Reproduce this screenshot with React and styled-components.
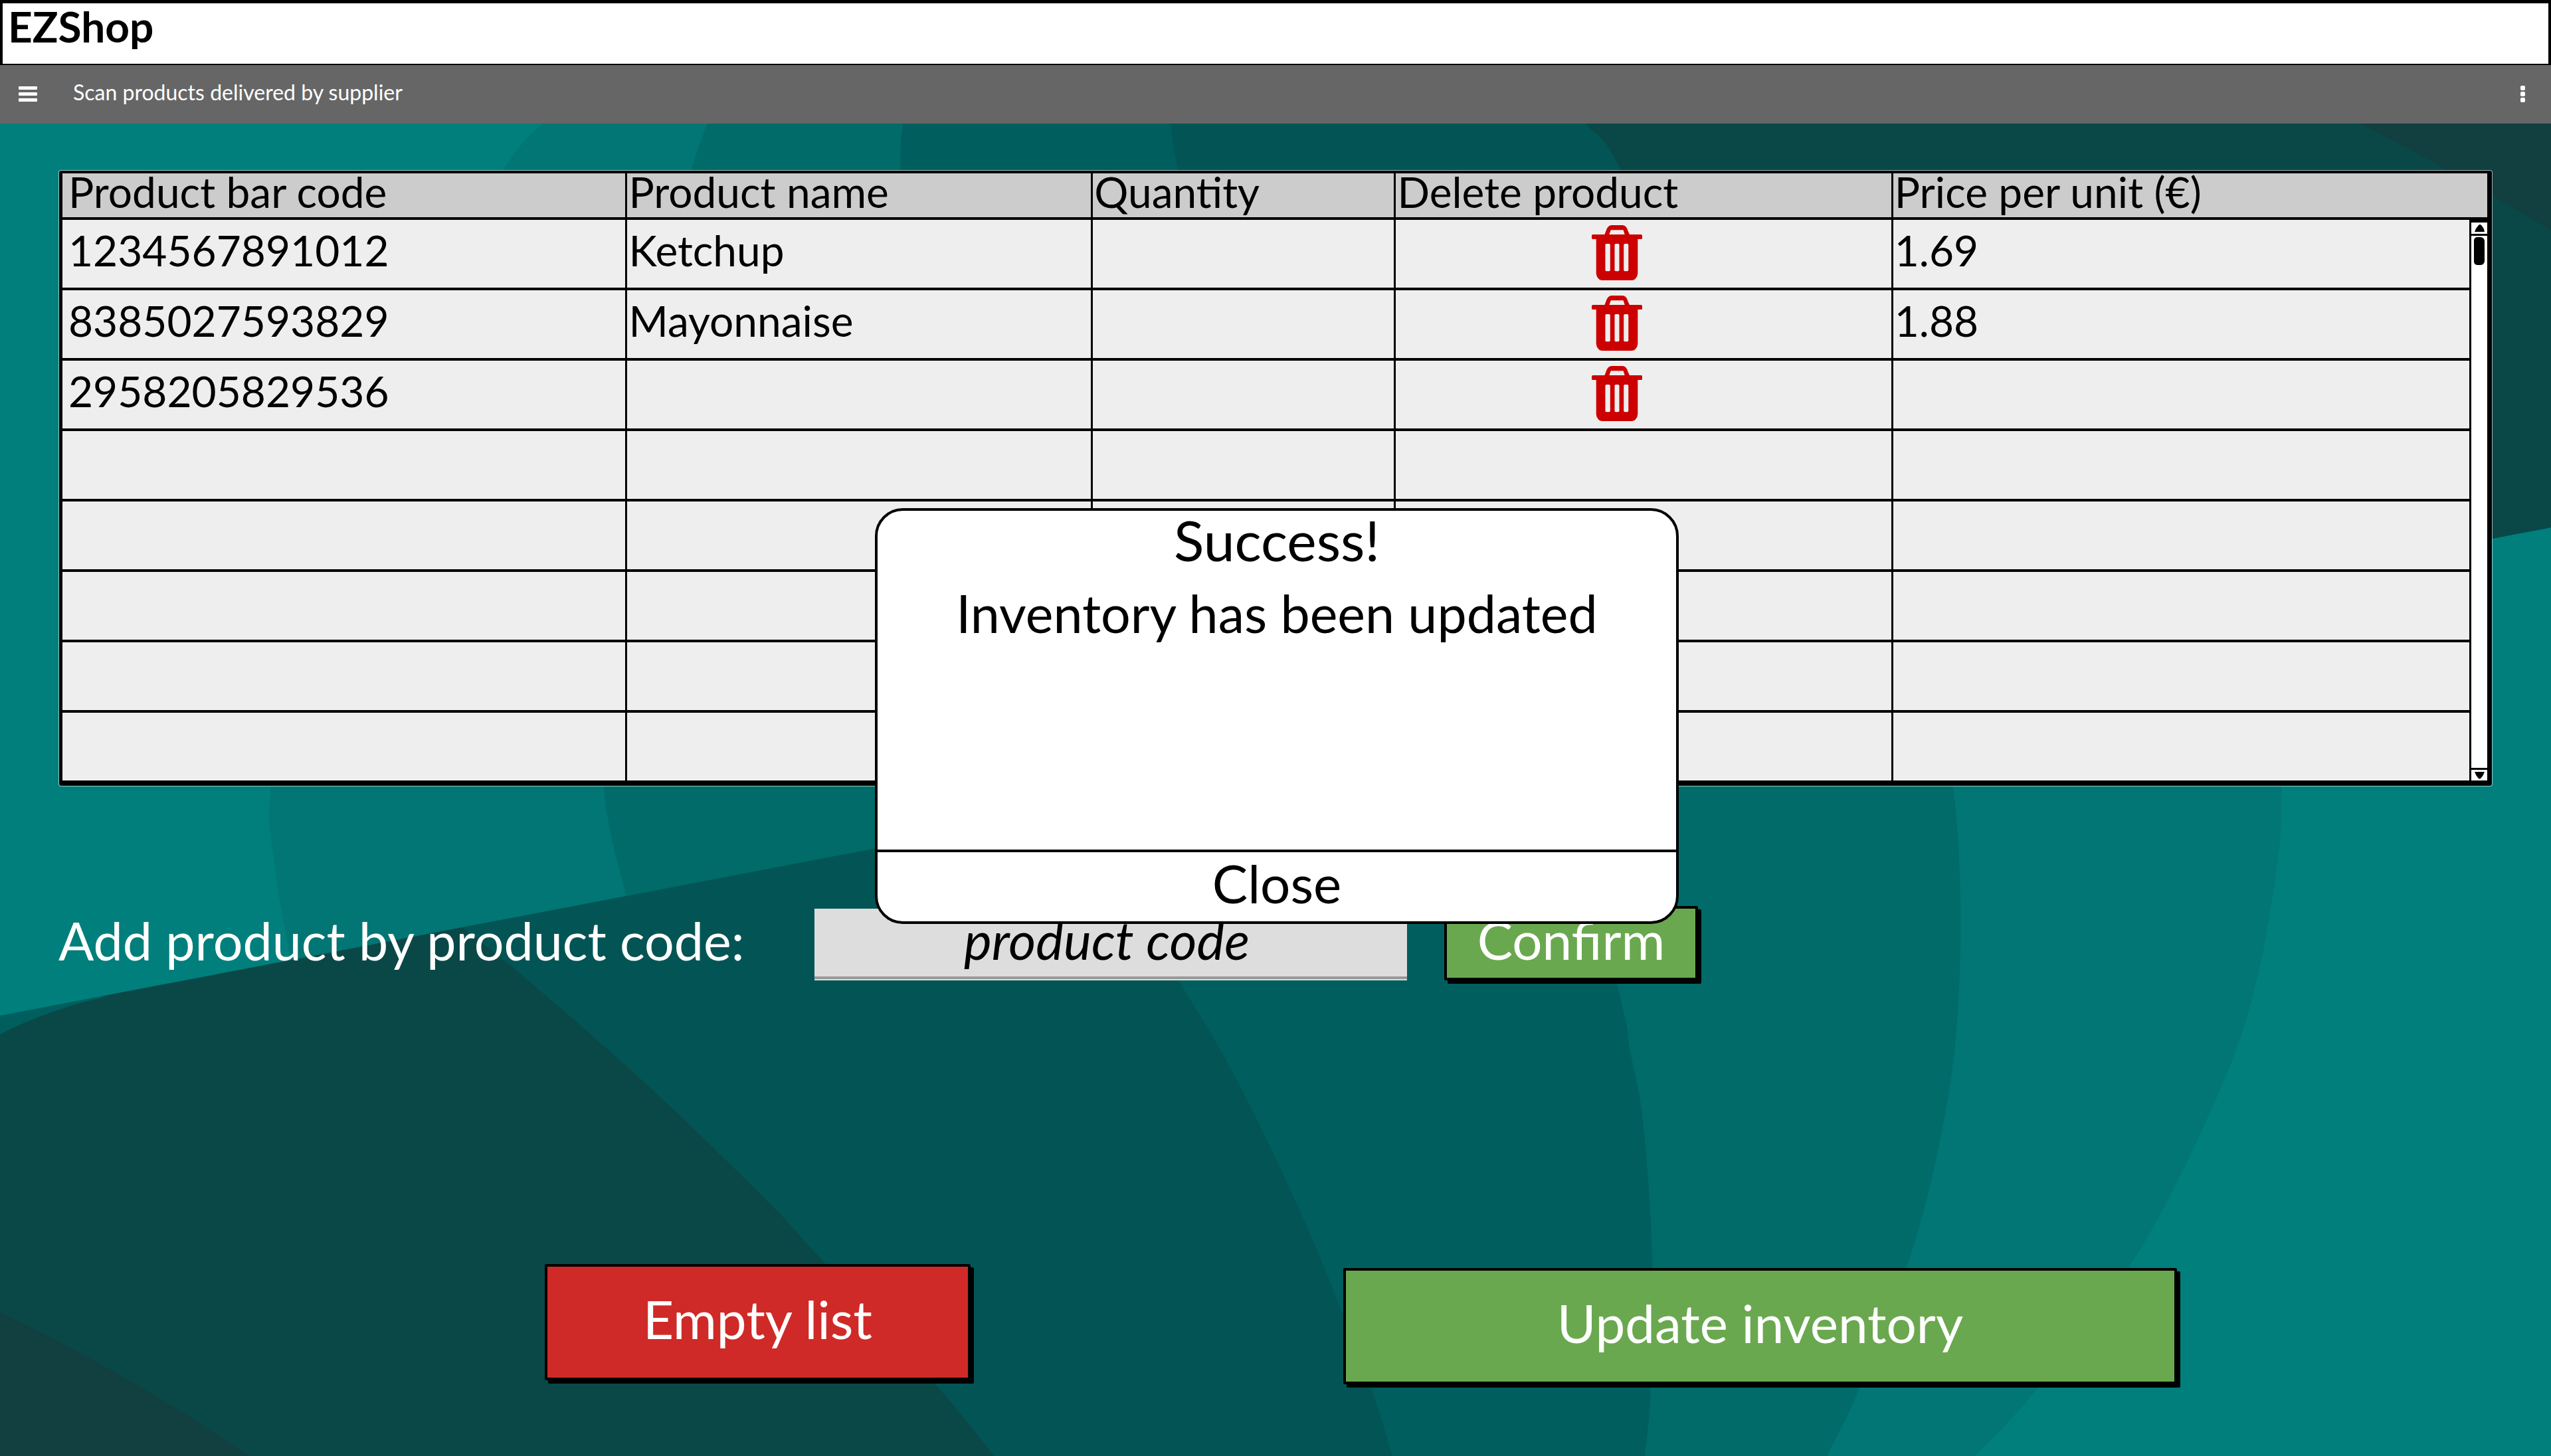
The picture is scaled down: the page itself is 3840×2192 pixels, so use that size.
import React from "react";
import styled, { createGlobalStyle } from "styled-components";

const GlobalStyle = createGlobalStyle`
  *, *::before, *::after { box-sizing: border-box; }
  body {
    margin: 0;
    background: #007f7c;
    font-family: Lato, "Open Sans", sans-serif;
    color: #000;
  }
  button, input { font: inherit; color: inherit; margin: 0; }
  button { cursor: pointer; }
`;

/* ---------- backdrop ---------- */

const Backdrop = styled.svg`
  position: fixed;
  inset: 0;
  width: 100%;
  height: 100%;
  z-index: -1;
`;

// Smooth curve through a list of points (Catmull-Rom converted to Béziers).
function curve(points) {
  const at = (i) => points[Math.max(0, Math.min(points.length - 1, i))];
  let d = `${points[0][0]} ${points[0][1]}`;
  for (let i = 0; i < points.length - 1; i++) {
    const [a, b, c, e] = [at(i - 1), at(i), at(i + 1), at(i + 2)];
    d += ` C${b[0] + (c[0] - a[0]) / 6} ${b[1] + (c[1] - a[1]) / 6}`;
    d += ` ${c[0] - (e[0] - b[0]) / 6} ${c[1] - (e[1] - b[1]) / 6} ${c[0]} ${c[1]}`;
  }
  return d;
}

const lowerBands = [
  ["#017674", [[3420, 900], [3434, 1184], [3426, 1314], [3393, 1492], [3338, 1649], [3222, 1880], [3067, 2090], [2973, 2192]]],
  ["#006b69", [[2900, 900], [2940, 1184], [2951, 1358], [2946, 1537], [2925, 1693], [2879, 1880], [2799, 2090], [2750, 2192]]],
  ["#005f5e", [[2320, 1060], [2434, 1482], [2454, 1583], [2473, 1687], [2487, 1890], [2485, 2090], [2476, 2192]]],
  ["#035555", [[1600, 1200], [1774, 1476], [1844, 1593], [1909, 1720], [1986, 1890], [2064, 2090], [2096, 2192]]],
  ["#0a4848", [[697, 1397], [788, 1470], [974, 1633], [1154, 1807], [1231, 1890], [1408, 2084], [1497, 2192]]],
];

const upperBands = [
  ["#017674", [[885, 110], [816, 186], [757, 256], [570, 540], [445, 880], [408, 1184], [413, 1300], [437, 1440], [460, 1540]]],
  ["#006b69", [[1095, 110], [1065, 186], [1041, 256], [950, 560], [905, 900], [909, 1184], [942, 1347], [965, 1440]]],
  ["#005f5e", [[1364, 110], [1359, 186], [1355, 256], [1350, 640], [1400, 1184], [1440, 1340]]],
  ["#035555", [[1754, 110], [1763, 186], [1773, 256], [1850, 640], [2000, 1260]]],
  ["#0a4848", [[2345, 110], [2388, 186], [2440, 256], [2600, 600], [2900, 1100]]],
];

function BackdropArt() {
  return (
    <Backdrop viewBox="0 0 3840 2192" preserveAspectRatio="none" aria-hidden="true">
      <defs>
        <clipPath id="upper">
          <path d="M0 0H3840V794L0 1529Z" />
        </clipPath>
      </defs>
      <rect width="3840" height="2192" fill="#007f7c" />
      {lowerBands.map(([fill, pts]) => (
        <path key={fill} fill={fill} d={`M0 900 L${curve(pts)} L0 2192Z`} />
      ))}
      <path d="M0 1500H160L124 1509Q52 1530 0 1557Z" fill="#005f5e" />
      <path d="M0 1975Q200 2072 375 2192H0Z" fill="#123f3f" />
      <g clipPath="url(#upper)">
        <rect width="3840" height="2192" fill="#007f7c" />
        {upperBands.map(([fill, pts]) => (
          <path key={fill} fill={fill} d={`M3840 110 L${curve(pts)} L3840 1600Z`} />
        ))}
        <path d="M3553 186Q3690 256 3840 347V186Z" fill="#123f3f" />
      </g>
    </Backdrop>
  );
}

/* ---------- header ---------- */

const Page = styled.div`
  display: flex;
  flex-direction: column;
  min-height: 100vh;
`;

const TitleBar = styled.header`
  height: 98px;
  padding: 0 8px;
  background: #fff;
  border: 4px solid #000;
  border-top-width: 5px;
  border-bottom-width: 2px;
`;

const Brand = styled.h1`
  margin: 0;
  font-size: 64px;
  line-height: 70px;
  font-weight: 700;
`;

const Toolbar = styled.nav`
  display: flex;
  align-items: center;
  height: 88px;
  padding: 0 38px 0 28px;
  background: #666;
  color: #fff;
`;

const ToolbarTitle = styled.h2`
  flex: 1;
  margin: 0;
  padding: 0 0 6px 54px;
  font-size: 32px;
  line-height: 40px;
  font-weight: 400;
`;

const IconButton = styled.button`
  display: inline-flex;
  padding: 0;
  border: 0;
  background: none;
  color: ${(p) => p.$color || "inherit"};
  svg { display: block; fill: currentColor; }
`;

/* ---------- table ---------- */

const Main = styled.main`
  padding: 71px 88px 0;
`;

const TablePanel = styled.section`
  margin: 0 1px;
  border: solid #000;
  border-width: 4px 7px 4px 5px;
  border-radius: 3px;
  background: #eee;
  box-shadow: 0 0 0 1px rgba(255, 255, 255, 0.6);
`;

const Table = styled.table`
  width: 100%;
  table-layout: fixed;
  border-collapse: separate;
  border-spacing: 0;
  font-size: 64px;
`;

const Col = styled.col`
  width: ${(p) => p.$width};
`;

const HeadCell = styled.th`
  height: 70px;
  padding: 0 0 10px ${(p) => (p.$first ? "9px" : "2px")};
  line-height: 56px;
  font-weight: 400;
  text-align: left;
  vertical-align: top;
  white-space: nowrap;
  background: #ccc;
  border-bottom: 4px solid #000;
  border-right: ${(p) => (p.$last ? "0" : "3px")} solid #000;
`;

const Cell = styled.td`
  height: 106px;
  padding: 0 0 10px ${(p) => (p.$first ? "9px" : "2px")};
  line-height: 92px;
  vertical-align: top;
  border-bottom: 4px solid #000;
  border-right: ${(p) => (p.$last ? "0" : "3px")} solid #000;
`;

const DeleteCell = styled(Cell)`
  padding: 8px 80px 0 0;
  line-height: 0;
  text-align: center;
`;

const ScrollCell = styled.td`
  position: relative;
  padding: 0;
  border-bottom: 4px solid #000;
`;

const ScrollTrack = styled.div`
  position: absolute;
  inset: 0;
  display: flex;
  flex-direction: column;
  align-items: stretch;
  background: #fff;
  border-left: 3px solid #000;
`;

const ScrollArrow = styled(IconButton)`
  justify-content: center;
  align-items: center;
  height: ${(p) => (p.$down ? "19px" : "24px")};
  border: solid #000;
  border-width: ${(p) => (p.$down ? "3px 0 0" : "4px 0 3px")};
`;

const ScrollThumb = styled.div`
  flex: none;
  width: 16px;
  height: 42px;
  margin: 2px 4px auto;
  border-radius: 5px 6px 6px 5px;
  background: #000;
`;

/* ---------- forms and buttons ---------- */

const AddRow = styled.form`
  display: grid;
  grid-template-columns: 1082fr 892fr 382fr 1140fr;
  column-gap: 56px;
  align-items: end;
  margin-top: 181px;
  font-size: 79px;
`;

const AddLabel = styled.label`
  padding-bottom: 14px;
  line-height: 92px;
  color: #fff;
  white-space: nowrap;
`;

const CodeInput = styled.input`
  width: 100%;
  min-width: 0;
  height: 108px;
  padding: 0 12px 16px 0;
  border: 0;
  border-radius: 0;
  outline: 0;
  background: #ddd;
  box-shadow: inset 0 -2px #ddd, inset 0 -6px #999;
  font-style: italic;
  text-align: center;
  &::placeholder { color: #000; opacity: 1; }
`;

const tones = { green: "#6aa84f", red: "#cf2a27" };

const Button = styled.button`
  width: 100%;
  height: ${(p) => (p.$large ? "175px" : "112px")};
  padding: 0 0 12px;
  border: 4px solid #000;
  border-radius: 2px;
  background: ${(p) => tones[p.$tone]};
  box-shadow: 5px 5px #000;
  color: #fff;
  font-size: 80px;
  line-height: 92px;
  white-space: nowrap;
`;

const Actions = styled.div`
  display: grid;
  grid-template-columns: 732fr 641fr 561fr 1255fr 475fr;
  height: 181px;
  margin: 427px 0 103px;
`;

const ActionSlot = styled.div`
  display: flex;
  grid-column: ${(p) => p.$column};
  align-self: ${(p) => p.$align};
`;

/* ---------- dialog ---------- */

const Overlay = styled.div`
  position: absolute;
  inset: 0;
  display: flex;
  justify-content: center;
  align-items: flex-start;
  padding: 765px 0 0 4px;
`;

const Dialog = styled.section`
  width: 1210px;
  border: 4px solid #000;
  border-radius: 42px;
  background: #fff;
  line-height: 92px;
  text-align: center;
`;

const DialogBody = styled.div`
  display: flex;
  flex-direction: column;
  gap: 20px;
  min-height: 510px;
`;

const DialogTitle = styled.h2`
  margin: 0;
  font-size: 84px;
  font-weight: 400;
  line-height: 88px;
`;

const DialogText = styled.p`
  margin: 0;
  font-size: 79px;
`;

const DialogButton = styled.button`
  display: block;
  width: 100%;
  padding: 0 0 12px;
  border: 0;
  border-top: 4px solid #000;
  background: none;
  font-size: 80px;
  line-height: 92px;
`;

/* ---------- icons ---------- */

const MenuIcon = () => (
  <svg width="28" height="24" viewBox="0 0 28 24" aria-hidden="true">
    <rect y="0" width="28" height="5" rx="1" />
    <rect y="9" width="28" height="5" rx="1" />
    <rect y="18" width="28" height="5" rx="1" />
  </svg>
);

const MoreIcon = () => (
  <svg width="8" height="26" viewBox="0 0 8 26" aria-hidden="true">
    <rect y="0" width="7" height="7" rx="2" />
    <rect y="9" width="7" height="7" rx="2" />
    <rect y="18" width="7" height="7" rx="2" />
  </svg>
);

const TrashIcon = () => (
  <svg width="76" height="83" viewBox="108 51 227 248" aria-hidden="true">
    <path d="M165 95L173 75Q180 52 196 51H248Q264 52 270 75L279 95H257L250 73H194L186 95Z" />
    <rect x="108" y="93" width="227" height="21" rx="5" />
    <path
      fillRule="evenodd"
      d="M128 112H315V268Q314 280 306 290Q300 299 290 299H153Q143 299 137 290Q129 280 128 268Z
         M174 135Q169 135 169 140V253Q169 258 174 258H186Q191 258 191 253V140Q191 135 186 135Z
         M216 135Q211 135 211 140V253Q211 258 216 258H227Q232 258 232 253V140Q232 135 227 135Z
         M257 135Q252 135 252 140V253Q252 258 257 258H268Q273 258 273 253V140Q273 135 268 135Z"
    />
  </svg>
);

const UpIcon = () => (
  <svg width="15" height="11" viewBox="0 0 15 11" aria-hidden="true">
    <path d="M0 11Q2 5 6 1Q8 -1 10 1Q14 5 15 11Z" />
  </svg>
);

const DownIcon = () => (
  <svg width="15" height="11" viewBox="0 0 15 11" aria-hidden="true">
    <path d="M0 0Q2 6 6 10Q7 11 9 10Q13 6 15 0Z" />
  </svg>
);

/* ---------- page ---------- */

const products = [
  { code: "1234567891012", name: "Ketchup", price: "1.69" },
  { code: "8385027593829", name: "Mayonnaise", price: "1.88" },
  { code: "2958205829536" },
  {},
  {},
  {},
  {},
  {},
];

function ProductTable() {
  return (
    <TablePanel>
      <Table>
        <colgroup>
          <Col $width="23.3%" />
          <Col $width="19.2%" />
          <Col $width="12.5%" />
          <Col $width="20.5%" />
          <Col />
          <Col $width="27px" />
        </colgroup>
        <thead>
          <tr>
            <HeadCell $first>Product bar code</HeadCell>
            <HeadCell>Product name</HeadCell>
            <HeadCell>Quantity</HeadCell>
            <HeadCell>Delete product</HeadCell>
            <HeadCell $last colSpan={2}>Price per unit (€)</HeadCell>
          </tr>
        </thead>
        <tbody>
          {products.map((p, i) => (
            <tr key={i}>
              <Cell $first>{p.code}</Cell>
              <Cell>{p.name}</Cell>
              <Cell />
              <DeleteCell>
                {p.code && (
                  <IconButton type="button" $color="#c00" aria-label="Delete product">
                    <TrashIcon />
                  </IconButton>
                )}
              </DeleteCell>
              <Cell $last>{p.price}</Cell>
              {i === 0 && (
                <ScrollCell rowSpan={products.length}>
                  <ScrollTrack>
                    <ScrollArrow type="button" aria-label="Scroll up">
                      <UpIcon />
                    </ScrollArrow>
                    <ScrollThumb />
                    <ScrollArrow type="button" $down aria-label="Scroll down">
                      <DownIcon />
                    </ScrollArrow>
                  </ScrollTrack>
                </ScrollCell>
              )}
            </tr>
          ))}
        </tbody>
      </Table>
    </TablePanel>
  );
}

export default function App() {
  const [open, setOpen] = React.useState(true);
  return (
    <Page>
      <GlobalStyle />
      <BackdropArt />
      <TitleBar>
        <Brand>EZShop</Brand>
      </TitleBar>
      <Toolbar>
        <IconButton type="button" aria-label="Menu">
          <MenuIcon />
        </IconButton>
        <ToolbarTitle>Scan products delivered by supplier</ToolbarTitle>
        <IconButton type="button" aria-label="More options">
          <MoreIcon />
        </IconButton>
      </Toolbar>
      <Main>
        <ProductTable />
        <AddRow onSubmit={(e) => e.preventDefault()}>
          <AddLabel htmlFor="code">Add product by product code:</AddLabel>
          <CodeInput id="code" type="text" placeholder="product code" />
          <Button type="submit" $tone="green">Confirm</Button>
        </AddRow>
        <Actions>
          <ActionSlot $column={2} $align="start">
            <Button type="button" $tone="red" $large>Empty list</Button>
          </ActionSlot>
          <ActionSlot $column={4} $align="end">
            <Button type="button" $tone="green" $large>Update inventory</Button>
          </ActionSlot>
        </Actions>
      </Main>
      {open && (
        <Overlay>
          <Dialog role="dialog" aria-labelledby="dialog-title">
            <DialogBody>
              <DialogTitle id="dialog-title">Success!</DialogTitle>
              <DialogText>Inventory has been updated</DialogText>
            </DialogBody>
            <DialogButton type="button" onClick={() => setOpen(false)}>Close</DialogButton>
          </Dialog>
        </Overlay>
      )}
    </Page>
  );
}
